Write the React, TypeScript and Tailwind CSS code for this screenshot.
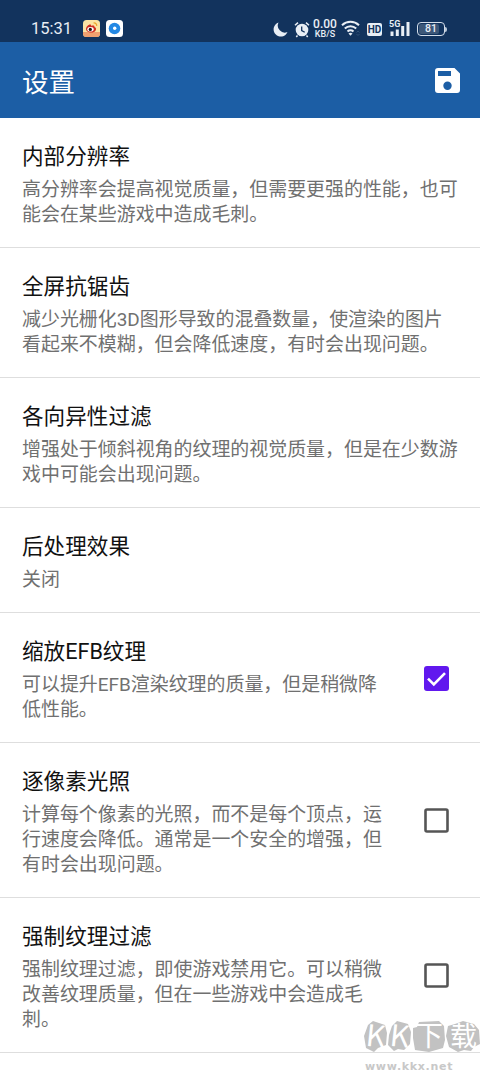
import React from 'react';

interface Setting {
  title: string;
  lines: string[];
  checked?: boolean;
}

const settings: Setting[] = [
  { title: '内部分辨率', lines: ['高分辨率会提高视觉质量，但需要更强的性能，也可', '能会在某些游戏中造成毛刺。'] },
  { title: '全屏抗锯齿', lines: ['减少光栅化3D图形导致的混叠数量，使渲染的图片', '看起来不模糊，但会降低速度，有时会出现问题。'] },
  { title: '各向异性过滤', lines: ['增强处于倾斜视角的纹理的视觉质量，但是在少数游', '戏中可能会出现问题。'] },
  { title: '后处理效果', lines: ['关闭'] },
  { title: '缩放EFB纹理', lines: ['可以提升EFB渲染纹理的质量，但是稍微降', '低性能。'], checked: true },
  { title: '逐像素光照', lines: ['计算每个像素的光照，而不是每个顶点，运', '行速度会降低。通常是一个安全的增强，但', '有时会出现问题。'], checked: false },
  { title: '强制纹理过滤', lines: ['强制纹理过滤，即使游戏禁用它。可以稍微', '改善纹理质量，但在一些游戏中会造成毛', '刺。'], checked: false },
];

const StatusBar: React.FC = () => (
  <div className="flex h-[42px] items-start bg-[#12335d] pt-[19px] text-[#e8eef5]">
    <span className="ml-[31px] w-[52px] text-[16.5px] leading-[20px]">15:31</span>
    {/* Notification icons */}
    <svg className="mt-[1px] h-[17px] w-[17px]" viewBox="0 0 17 17">
      <rect width="17" height="17" rx="3.5" fill="#fbe3a4" />
      <path d="M0 12h17v1.5a3.5 3.5 0 0 1-3.5 3.5h-10A3.5 3.5 0 0 1 0 13.5z" fill="#f0a070" />
      <path d="M3 9c0-2.5 3-5 4.5-4.5.8.3.6 1 .5 1.5 1.5-.8 3.7-.6 3.5 1.1 1.5.5 1.5 1.4 1.5 2.1 0 2-2.5 3.4-5 3.4S3 11 3 9z" fill="#cf2b20" />
      <ellipse cx="7.5" cy="9.3" rx="3.2" ry="2.3" fill="#fff" />
      <circle cx="7.3" cy="9.4" r="1.6" fill="#20130f" />
      <path d="M10.5 3c2-.4 3.5 1.3 3.2 3" fill="none" stroke="#eda52c" strokeWidth="1.2" />
    </svg>
    <svg className="mt-[1px] ml-[6px] h-[17px] w-[17px]" viewBox="0 0 17 17">
      <rect width="17" height="17" rx="3.5" fill="#fff" />
      <circle cx="8.5" cy="8.5" r="5.8" fill="#2388e4" />
      <circle cx="8.7" cy="8.3" r="1.7" fill="#fff" />
    </svg>
    <svg className="mt-[3px] ml-[150px] h-[15px] w-[15px]" viewBox="0 0 15 15" fill="currentColor">
      <path d="M5.5.5a7.2 7.2 0 1 0 9 9.5A7 7 0 0 1 5.5.5z" />
    </svg>
    <svg className="mt-[2px] ml-[6px] h-[17px] w-[16px]" viewBox="0 0 16 17">
      <path d="M1 4.3 4 1.6M15 4.3 12 1.6M3.5 14.5 2.3 16M12.5 14.5l1.2 1.5" stroke="currentColor" strokeWidth="1.5" />
      <circle cx="8" cy="9" r="6.3" fill="currentColor" />
      <path d="M7.7 5.5v4l3 1.7" fill="none" stroke="#12335d" strokeWidth="1.3" />
    </svg>
    <div className="ml-[3px] flex w-[24px] flex-col items-center font-medium">
      <span className="text-[12px] leading-[11px]">0.00</span>
      <span className="text-[9px] leading-[9px]">KB/S</span>
    </div>
    <svg className="mt-[1px] ml-[4px] h-[16px] w-[20px]" viewBox="0 0 20 16" fill="none" stroke="currentColor" strokeWidth="2">
      <path d="M1 5.2a12.5 12.5 0 0 1 17 0M3.8 8.5a8.3 8.3 0 0 1 11.4 0M6.5 11.5a4.4 4.4 0 0 1 6 0" />
      <path d="m9.5 15.8-2-2.2q2-1.5 4 0z" fill="currentColor" stroke="none" />
      <path d="m15.5 12.5 1.5-1.5 1.5 1.5m-3 1.5 1.5 1.5 1.5-1.5" stroke="#315176" strokeWidth="1" />
    </svg>
    <span className="mt-[4px] ml-[6px] h-[13px] w-[15px] rounded-[2px] bg-current text-center">
      <span className="block text-[10px] leading-[13px] font-bold text-[#12335d]">HD</span>
    </span>
    <div className="relative ml-[7px] h-[18px] w-[21px]">
      <span className="absolute top-[1px] left-0 text-[9px] leading-[9px] font-bold">5G</span>
      <svg className="mt-[2px] h-[15px] w-[21px]" viewBox="0 0 21 15" fill="currentColor">
        <path d="M1.5 10.5h3V15h-3zM6.8 8.5h3V15h-3zM12.2 5h3v10h-3zM17.5 1h3v14h-3z" />
      </svg>
    </div>
    <div className="mt-[3px] ml-[7px] flex items-center">
      <div className="h-[14px] w-[28px] rounded-[4px] border border-[#d4deea] p-[1px]">
        <div className="h-full w-[20px] rounded-[2px] bg-[#3c5778]">
          <span className="block w-[24px] text-center text-[10.5px] leading-[10px] font-medium">81</span>
        </div>
      </div>
      <span className="h-[5px] w-[2px] rounded-r-sm bg-[#b9c7d7]" />
    </div>
  </div>
);

const Checkbox: React.FC<{ checked: boolean }> = ({ checked }) => (
  <svg className="mt-[1px] mr-[31px] h-[25px] w-[25px] shrink-0" viewBox="0 0 25 25">
    {checked ? (
      <>
        <rect width="25" height="25" rx="3" fill="#6118ee" />
        <path d="m4 12.7 5.8 5.8L21 7.2" fill="none" stroke="#fff" strokeWidth="2.6" />
      </>
    ) : (
      <rect x="1.5" y="1.5" width="22" height="22" rx="1.5" fill="none" stroke="#555" strokeWidth="2.6" />
    )}
  </svg>
);

const SettingRow: React.FC<{ item: Setting }> = ({ item }) => (
  <div className="flex items-center justify-between border-b border-[#dedede] pl-[22px]">
    <div className="pt-[24px] pb-[20px]">
      <h2 className="text-[21.6px] leading-[30px] whitespace-nowrap text-[#111]">{item.title}</h2>
      <p className="mt-[5px] text-[18.96px] leading-[25px] whitespace-nowrap text-[#707070]">
        {item.lines.map((line) => (
          <span key={line} className="block">{line}</span>
        ))}
      </p>
    </div>
    {item.checked !== undefined && <Checkbox checked={item.checked} />}
  </div>
);

const Watermark: React.FC = () => (
  <div className="absolute top-[1020px] left-[363px] h-[53px] w-[117px]">
    <svg className="h-[33px] w-[117px] overflow-visible" viewBox="0 0 117 33">
      <path
        d="m5 5 5-4 12 4 2 8-1 12-8 3-4 4-8-4-2-12zM29 6l5-5 11 3 3 8-1 12-6 6-6-1-4 2-6-6 1-10zM50 8l4-1 2-5 20-1 5 5 1 14-2 8-14 4-14-2-2-12zM85 6l7-2 8-3 11 3 5 6 1 14-6 3-3 4-7-1-6 2-9-5-3-11z"
        fill="#c2c2c2"
      />
      <g fill="#fff" fontFamily="'Noto Sans CJK SC', sans-serif">
        <text x="3" y="27" fontSize="30" transform="rotate(6 14 16)">K</text>
        <text x="27" y="27" fontSize="30" transform="rotate(6 38 16)">K</text>
        <text x="52" y="26" fontSize="28">下</text>
        <text x="87" y="26" fontSize="27">载</text>
      </g>
    </svg>
    <span className="mt-[4px] ml-[2px] block font-['DejaVu_Sans'] text-[11px] leading-[20px] font-bold tracking-[0.7px] text-[#c8c8c8]">
      www.kkx.net
    </span>
  </div>
);

const App: React.FC = () => (
  <div className="relative h-[1073px] w-[480px] overflow-hidden bg-white font-[Roboto,'Noto_Sans_CJK_SC',sans-serif]">
    <StatusBar />
    <header className="flex h-[76px] items-center justify-between bg-[#1c5ea5] pr-[20px] pl-[22px] text-white">
      <h1 className="pt-[6px] text-[26.5px] leading-[36px]">设置</h1>
      <svg className="h-[25px] w-[25px]" viewBox="0 0 25 25" fill="currentColor">
        <path fillRule="evenodd" d="M3 0h16.5L25 5.5V22a3 3 0 0 1-3 3H3a3 3 0 0 1-3-3V3a3 3 0 0 1 3-3zM3 3v5h13V3zm9.5 10.5a4.2 4.2 0 1 0 0 8.4 4.2 4.2 0 0 0 0-8.4z" />
      </svg>
    </header>
    <main>
      {settings.map((item) => (
        <SettingRow key={item.title} item={item} />
      ))}
    </main>
    <Watermark />
  </div>
);

export default App;
